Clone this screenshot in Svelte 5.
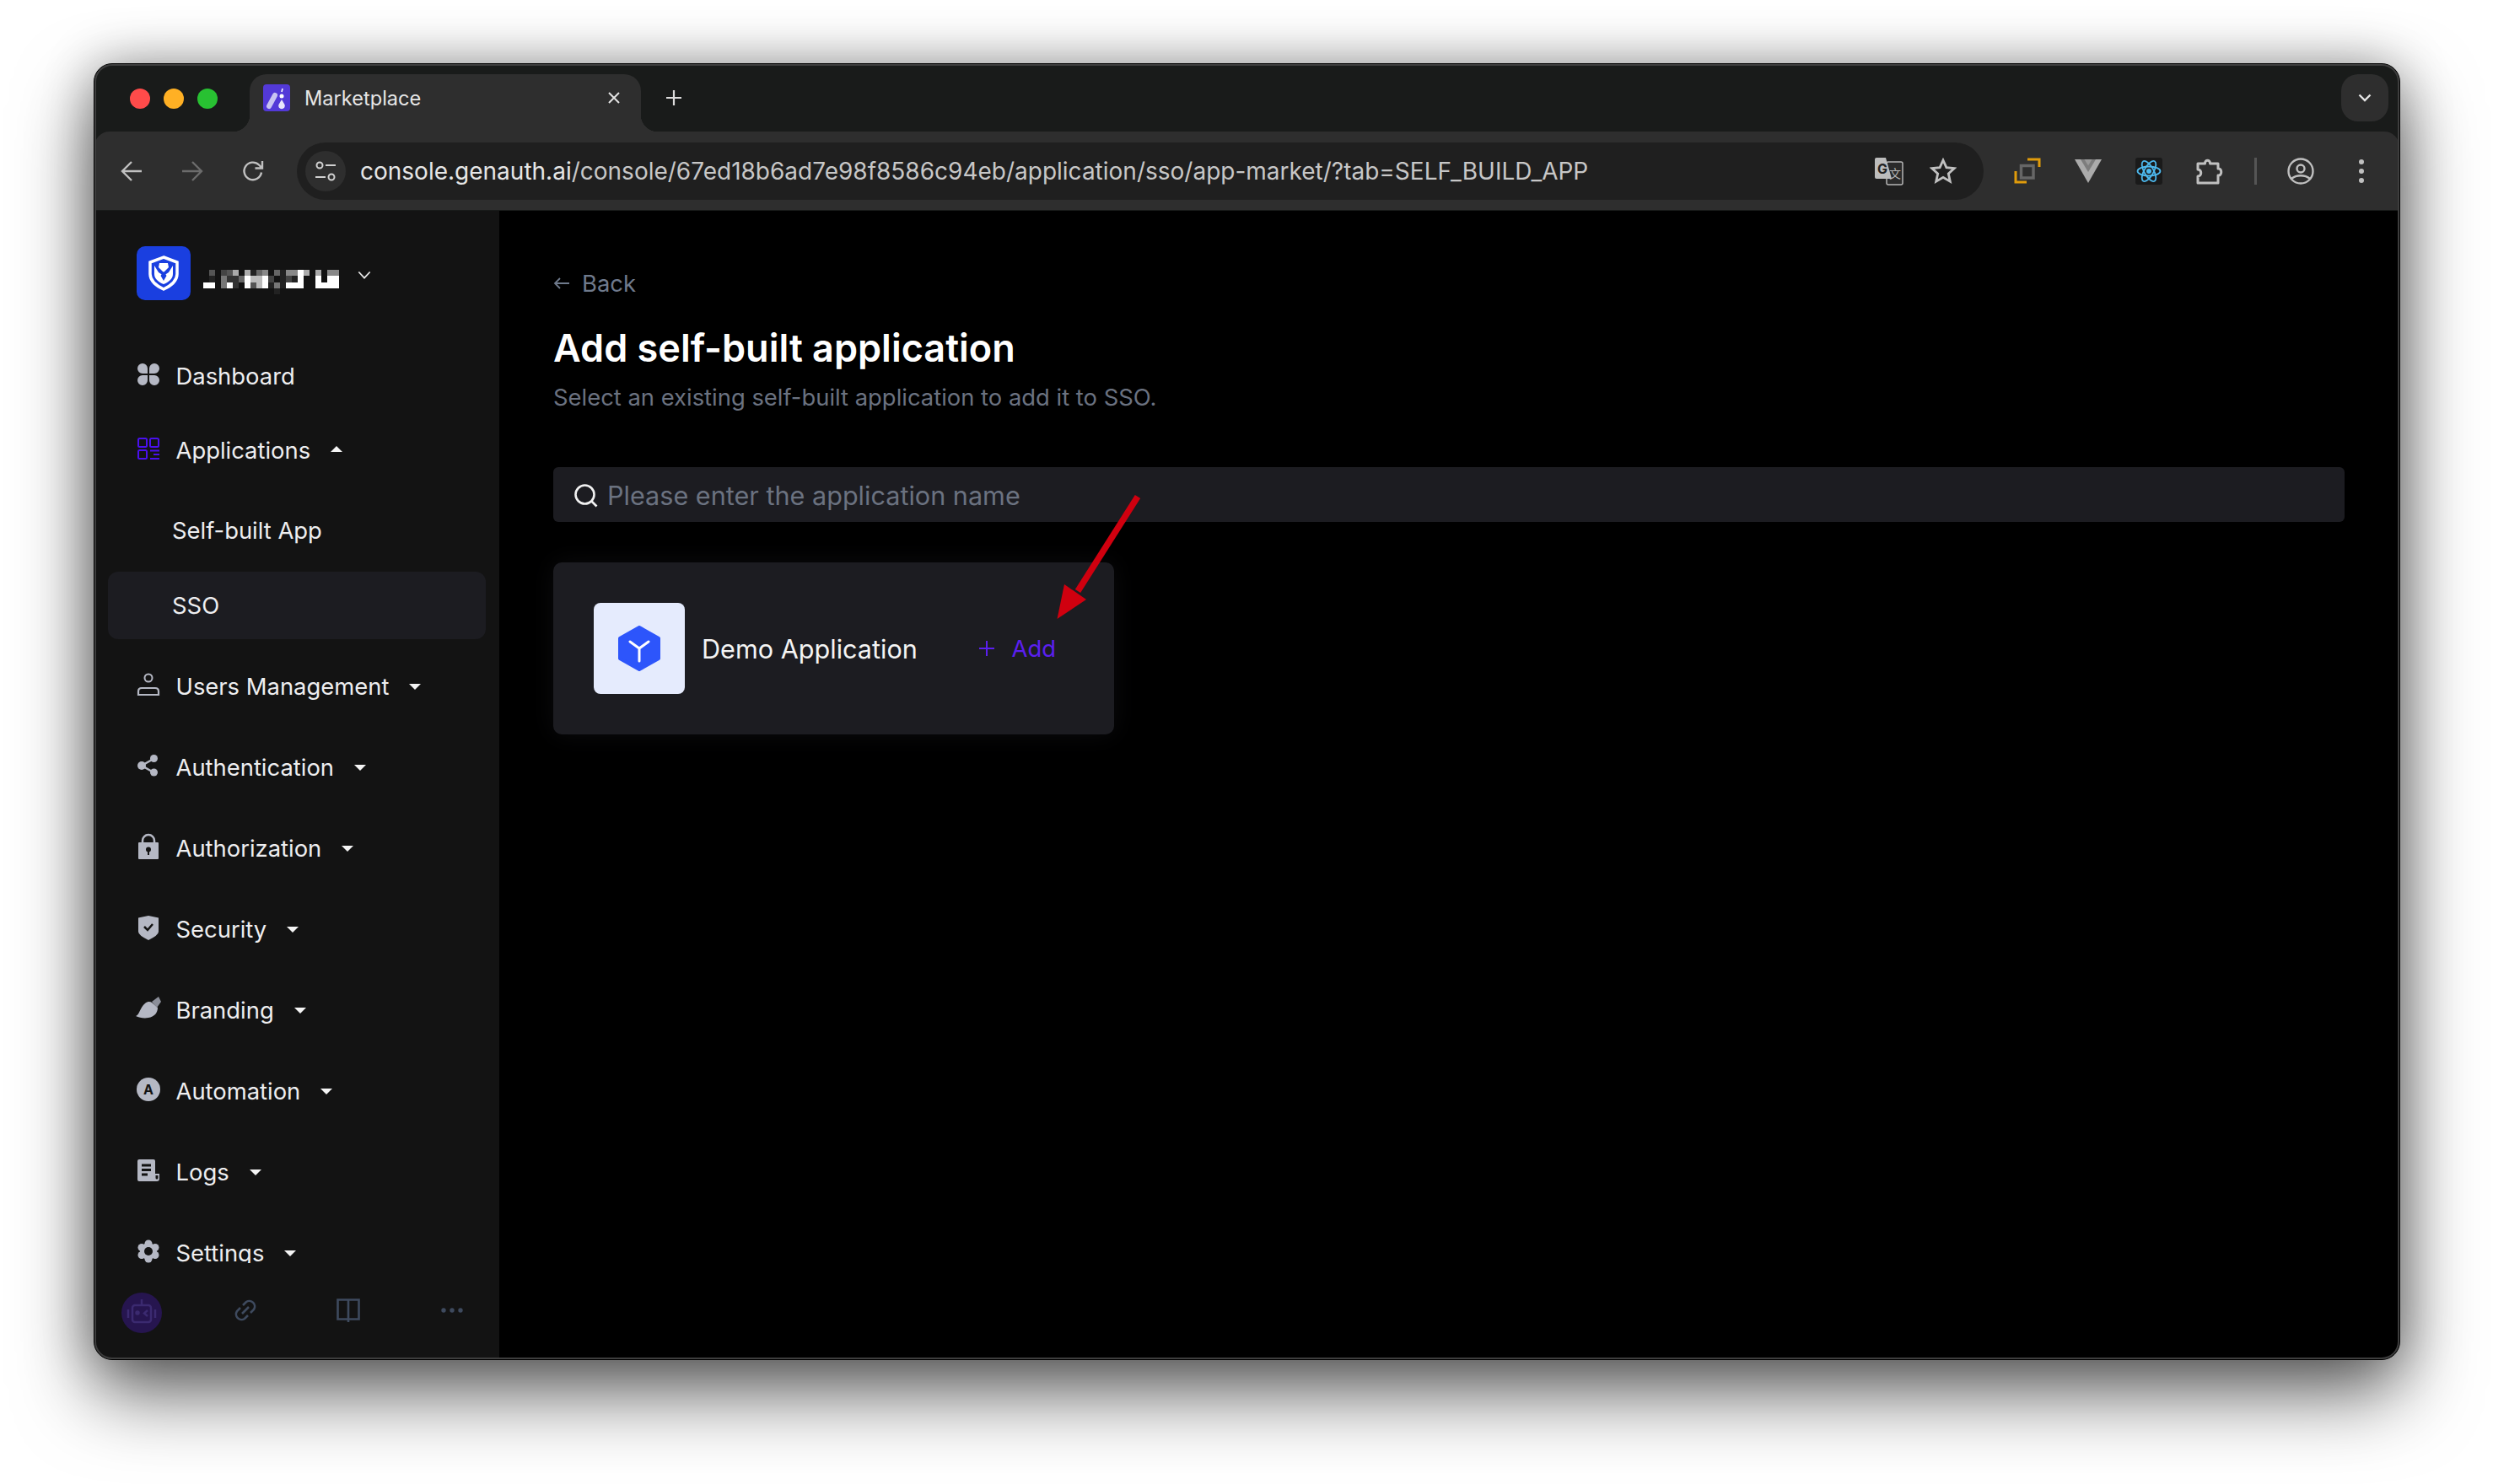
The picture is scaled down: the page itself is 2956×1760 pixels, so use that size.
<script>
	const G = '#b5b8c4';
	const BG = '#131313';

	const menu = [
		{ label: 'Users Management', icon: `<circle cx="13" cy="5" r="4.5" fill="none" stroke="${G}" stroke-width="2"/><path d="M1 25v-4q0-4 4-4h16q4 0 4 4v4z" fill="none" stroke="${G}" stroke-width="2.2"/>` },
		{ label: 'Authentication', icon: `<path d="M19 5 5 13l14 8" fill="none" stroke="${G}" stroke-width="2.5"/><circle cx="19.5" cy="4.5" r="4.5" fill="${G}"/><circle cx="5" cy="13" r="5" fill="${G}"/><circle cx="19.5" cy="21" r="4.5" fill="${G}"/>` },
		{ label: 'Authorization', icon: `<path d="M6 11V6a7 7 0 0 1 14 0v5" fill="none" stroke="${G}" stroke-width="2.5"/><rect x="1" y="8" width="24" height="20" rx="1" fill="${G}"/><circle cx="13" cy="16.5" r="3" fill="${BG}"/><rect x="12" y="17" width="2" height="6" fill="${BG}"/>` },
		{ label: 'Security', icon: `<path d="M1 1.500 13-1l12 2.500V18q0 4-12 10Q1 22 1 18z" fill="${G}"/><path d="m8 12 4 4 6-7" fill="none" stroke="${BG}" stroke-width="2.5"/>` },
		{ label: 'Branding', icon: `<path d="M-2 22C2 21 3 12 9 7c3-2.500 6-2.500 8-1l7 6c0 6-4 11-11 12-5 1-11 0-15-2z" fill="${G}"/><path d="M17 5l8-6 3 6-5 7z" fill="#8b8e99"/>` },
		{ label: 'Automation', icon: `<circle cx="13" cy="13" r="14" fill="${G}"/><text x="13" y="19" text-anchor="middle" font-family="Inter, sans-serif" font-weight="700" font-size="16" fill="${BG}">A</text>` },
		{ label: 'Logs', icon: `<path d="M2 0h17q2 0 2 2v15h5v6q0 3-3 3H2q-2 0-2-2V2q0-2 2-2z" fill="${G}"/><path d="M5 7h11M5 12.500h11M5 18h7" stroke="${BG}" stroke-width="3"/><path d="M21.500 19v3q0 1.500 1.500 1.500t1.500-1.500v-3z" fill="${BG}"/>` },
		{ label: 'Settings', icon: `<circle cx="13" cy="13" r="10" fill="${G}"/><circle cx="13" cy="4" r="4.500" fill="${G}"/><circle cx="13" cy="22" r="4.500" fill="${G}"/><circle cx="5" cy="8.500" r="4.500" fill="${G}"/><circle cx="21" cy="8.500" r="4.500" fill="${G}"/><circle cx="5" cy="17.500" r="4.500" fill="${G}"/><circle cx="21" cy="17.500" r="4.500" fill="${G}"/><circle cx="13" cy="13" r="5" fill="${BG}"/>` }
	];

	// blurred workspace name, one hex digit of grey per 7px cell
	const mosaic = [
		'05045a1a26806288fa0a088',
		'0207336fbbf40242f00f1ff',
		'ff07f30f5bf272fff00ffff',
		'00000000000020000000000'
	];
	const cells = mosaic.flatMap((row, y) =>
		[...row].flatMap((c, x) => {
			if (c === '0') return [];
			const v = parseInt(c, 16) * 17;
			return [{ x: x * 7, y: y * 7.3, fill: `rgb(${v},${v},${v})` }];
		})
	);
</script>

<div class="page">
	<div class="window">
		<div class="strip">
			<div class="lights">
				<i class="red"></i><i class="yellow"></i><i class="green"></i>
			</div>
			<div class="tab">
				<svg class="favicon" viewBox="0 0 32 32" width="32" height="32">
					<rect width="32" height="32" rx="4" fill="#5339d8" />
					<path d="M7 26 14 13" stroke="#c9c4f2" stroke-width="6" stroke-linecap="round" />
					<circle cx="22" cy="14" r="2.500" fill="#fff" />
					<path d="M22 18l3.500 6a3.800 3.800 0 1 1-7 0z" fill="#e9e6fb" />
					<path d="M23 5l-1 4" stroke="#fff" stroke-width="1.500" />
				</svg>
				<span class="tab-title">Marketplace</span>
				<svg class="tab-x" viewBox="0 0 16 16" width="16" height="16">
					<path d="M2 2l12 12M14 2 2 14" stroke="#e3e3e3" stroke-width="2" />
				</svg>
			</div>
			<svg class="plus" viewBox="0 0 20 20" width="20" height="20">
				<path d="M10 1v18M1 10h18" stroke="#dcdcdc" stroke-width="2.200" />
			</svg>
			<div class="tab-list">
				<svg viewBox="0 0 16 10" width="16" height="10">
					<path d="M1.500 1.500 8 8l6.500-6.500" fill="none" stroke="#e6e6e6" stroke-width="2.400" />
				</svg>
			</div>
		</div>

		<div class="toolbar">
			<button class="tool" aria-label="Back">
				<svg viewBox="0 0 26 26" width="26" height="26"><path d="M25 13H3M13 2 2 13l11 11" fill="none" stroke="#c0c0c0" stroke-width="2.400" /></svg>
			</button>
			<button class="tool" aria-label="Forward">
				<svg viewBox="0 0 26 26" width="26" height="26"><path d="M1 13h22M13 2l11 11-11 11" fill="none" stroke="#6c6c6c" stroke-width="2.400" /></svg>
			</button>
			<button class="tool" aria-label="Reload">
				<svg viewBox="0 0 26 26" width="26" height="26"><path d="M23 14.500A10.300 10.300 0 1 1 20 5.500L23.500 9M24 1v8.500h-8.500" fill="none" stroke="#c0c0c0" stroke-width="2.400" /></svg>
			</button>

			<div class="omnibox">
				<div class="site-info">
					<svg viewBox="0 0 26 26" width="26" height="26">
						<circle cx="6" cy="6" r="3.500" fill="none" stroke="#d0d0d0" stroke-width="2" />
						<circle cx="20" cy="20" r="3.500" fill="none" stroke="#d0d0d0" stroke-width="2" />
						<path d="M13 6h12M1 20h12" stroke="#d0d0d0" stroke-width="2" />
					</svg>
				</div>
				<span class="url">console.genauth.ai<span class="url-path">/console/67ed18b6ad7e98f8586c94eb/application/sso/app-market/?tab=SELF_BUILD_APP</span></span>
				<div class="omni-icon">
					<svg viewBox="0 0 34 34" width="34" height="34">
						<rect x="14" y="6" width="19" height="27" rx="2" fill="#2a2a2a" stroke="#b5b5b5" stroke-width="1.500" />
						<text x="24" y="25" text-anchor="middle" font-family="'Noto Sans CJK SC', sans-serif" font-size="14" fill="#b5b5b5">文</text>
						<path d="M2 1h11l7 25H2q-2 0-2-2V3q0-2 2-2z" fill="#bdbdbd" />
						<text x="9" y="20" text-anchor="middle" font-family="Inter, sans-serif" font-weight="700" font-size="16" fill="#222">G</text>
					</svg>
				</div>
				<div class="omni-icon">
					<svg viewBox="0 0 32 32" width="32" height="32">
						<path d="m16 3 3.900 8.600 9.400 1-7 6.300 2 9.300L16 23.400l-8.300 4.800 2-9.300-7-6.300 9.400-1z" fill="none" stroke="#c0c0c0" stroke-width="2.800" />
					</svg>
				</div>
			</div>

			<div class="extensions">
				<button class="tool" aria-label="Extension">
					<svg viewBox="0 0 32 32" width="32" height="32">
						<rect x="8.500" y="9.500" width="14.500" height="14.500" fill="none" stroke="#666" stroke-width="3.500" />
						<path d="M16 2h14v9M2 16v13h13" fill="none" stroke="#e09b0b" stroke-width="3" />
					</svg>
				</button>
				<button class="tool" aria-label="Vue devtools">
					<svg viewBox="0 0 32 28" width="32" height="28">
						<path d="M0 0h32L16 28z" fill="#ababab" />
						<path d="M7 0h18l-9 15z" fill="#7d7d7d" />
						<path d="M11.500 0h9L16 7.500z" fill="#999" />
					</svg>
				</button>
				<button class="tool" aria-label="React devtools">
					<svg viewBox="0 0 32 32" width="32" height="32">
						<rect width="32" height="32" rx="3" fill="#1a1a1a" />
						<g fill="none" stroke="#4db9ee" stroke-width="1.800">
							<ellipse cx="16" cy="16" rx="13.500" ry="5.500" />
							<ellipse cx="16" cy="16" rx="13.500" ry="5.500" transform="rotate(60 16 16)" />
							<ellipse cx="16" cy="16" rx="13.500" ry="5.500" transform="rotate(120 16 16)" />
						</g>
						<circle cx="16" cy="16" r="3" fill="#4db9ee" />
					</svg>
				</button>
				<button class="tool" aria-label="Extensions">
					<svg viewBox="0 0 32 32" width="32" height="32">
						<path d="M2 7h8.500C10 2 17 2 16.500 7H26v6c5-1 5 9 0 8v9H2v-8c5 0 5-8 0-8z" fill="none" stroke="#c0c0c0" stroke-width="3" stroke-linejoin="round" />
					</svg>
				</button>
				<div class="tool-sep"></div>
				<button class="tool" aria-label="Profile">
					<svg viewBox="0 0 32 32" width="32" height="32">
						<circle cx="16" cy="16" r="14.500" fill="none" stroke="#c0c0c0" stroke-width="2.400" />
						<circle cx="16" cy="13" r="4.500" fill="none" stroke="#c0c0c0" stroke-width="2.400" />
						<path d="M5 25c6-5 16-5 22 0" fill="none" stroke="#c0c0c0" stroke-width="2.400" />
					</svg>
				</button>
				<button class="tool" aria-label="Menu">
					<svg viewBox="0 0 6 28" width="6" height="28">
						<circle cx="3" cy="3" r="3" fill="#c0c0c0" />
						<circle cx="3" cy="14" r="3" fill="#c0c0c0" />
						<circle cx="3" cy="25" r="3" fill="#c0c0c0" />
					</svg>
				</button>
			</div>
		</div>

		<div class="body">
			<aside class="sidebar">
				<div class="brand">
					<svg class="logo" viewBox="0 0 64 64" width="64" height="64">
						<rect width="64" height="64" rx="10" fill="#1a3fe0" />
						<path d="M32 13 48 19v14c0 9-8 14-16 18-8-4-16-9-16-18V19z" fill="none" stroke="#fff" stroke-width="3.500" />
						<path d="M27 20h10l1 5-6 6-6-6zM21 23l5 8 6 4 6-4 5-8v10c0 6-6 10-11 12-5-2-11-6-11-12z" fill="#fff" />
						<path d="m32 30 3.500 5-3.500 6-3.500-6z" fill="#1a3fe0" />
					</svg>
					<svg class="mosaic" viewBox="0 0 161 30" width="161" height="30" shape-rendering="crispEdges">
						{#each cells as c}
							<rect x={c.x} y={c.y} width="7" height="7.300" fill={c.fill} />
						{/each}
					</svg>
					<svg class="brand-chevron" viewBox="0 0 18 12" width="16" height="11">
						<path d="M1.500 1.500 9 9.500l7.500-8" fill="none" stroke="#e8e8e8" stroke-width="2" />
					</svg>
				</div>

				<nav class="menu">
					<div class="row">
						<svg class="icon" viewBox="0 0 26 26">
							<path d="M6 0a6 6 0 0 1 6 6v6H6A6 6 0 0 1 6 0zM20 0a6 6 0 0 1 0 12h-6V6a6 6 0 0 1 6-6zM6 14h6v6a6 6 0 1 1-6-6zM14 14h6a6 6 0 1 1-6 6z" fill={G} />
						</svg>
						<span>Dashboard</span>
					</div>
					<div class="row">
						<svg class="icon" viewBox="0 0 26 26" fill="none" stroke="#4a10ee" stroke-width="2">
							<rect x="1" y="1" width="10" height="10" rx="1.500" />
							<rect x="15" y="1" width="10" height="10" rx="1.500" />
							<rect x="1" y="15" width="10" height="10" rx="1.500" />
							<path d="M15 15.500h11M19 20h7M15 25h11" />
						</svg>
						<span>Applications</span>
						<i class="caret up"></i>
					</div>
					<div class="row sub first">Self-built App</div>
					<div class="row sub active">SSO</div>
					{#each menu as item (item.label)}
						<div class="row group">
							<svg class="icon" viewBox="0 0 26 26">{@html item.icon}</svg>
							<span>{item.label}</span>
							<i class="caret"></i>
						</div>
					{/each}
				</nav>

				<div class="sidebar-foot">
					<div class="robot">
						<svg viewBox="0 0 36 36" width="36" height="36" fill="none" stroke="#3b2a70" stroke-width="2.500">
							<rect x="7" y="9" width="22" height="20" rx="3" />
							<path d="M18 2v6M2 14v10M34 14v10" />
							<circle cx="13" cy="18" r="1.500" fill="#3b2a70" />
							<path d="m25 15-4 3.500 4 3.500" />
						</svg>
					</div>
					<button class="foot-btn" aria-label="Link">
						<svg viewBox="0 0 28 28" width="28" height="28" fill="none" stroke="#3e4a5e" stroke-width="2.600">
							<path d="M11 8l4-4a6.500 6.500 0 0 1 9 9l-4 4M17 20l-4 4a6.500 6.500 0 0 1-9-9l4-4M10 18l8-8" />
						</svg>
					</button>
					<button class="foot-btn" aria-label="Docs">
						<svg viewBox="0 0 28 28" width="28" height="28" fill="none" stroke="#3e4a5e" stroke-width="2.600">
							<path d="M1.500 1.500h25v23h-25zM14 1.500V28" />
						</svg>
					</button>
					<button class="foot-btn" aria-label="More">
						<svg viewBox="0 0 26 6" width="26" height="6" fill="#3e4a5e">
							<circle cx="3" cy="3" r="2.700" />
							<circle cx="13" cy="3" r="2.700" />
							<circle cx="23" cy="3" r="2.700" />
						</svg>
					</button>
				</div>
			</aside>

			<main class="main">
				<div class="back">
					<svg viewBox="0 0 20 18" width="20" height="18">
						<path d="M19 9H2M8 3 2 9l6 6" fill="none" stroke="#6f7a8c" stroke-width="1.800" />
					</svg>
					<span>Back</span>
				</div>
				<h1>Add self-built application</h1>
				<p class="sub-title">Select an existing self-built application to add it to SSO.</p>

				<div class="search">
					<svg viewBox="0 0 28 28" width="28" height="28">
						<circle cx="12.500" cy="12.500" r="11" fill="none" stroke="#f2f2f2" stroke-width="2.600" />
						<path d="m20.500 20.500 6 6" stroke="#f2f2f2" stroke-width="2.600" />
					</svg>
					<span>Please enter the application name</span>
				</div>

				<div class="card">
					<div class="app-icon">
						<svg viewBox="0 0 50 54" width="50" height="54">
							<path d="M25 2 48 15v24L25 52 2 39V15z" fill="#2d55fb" stroke="#2d55fb" stroke-width="4" stroke-linejoin="round" />
							<path d="M25 27v15M25 27 14 19M25 27l11-8" fill="none" stroke="#fff" stroke-width="3" stroke-linecap="round" />
						</svg>
					</div>
					<span class="app-name">Demo Application</span>
					<span class="add">
						<svg viewBox="0 0 18 18" width="18" height="18">
							<path d="M9 0v18M0 9h18" stroke="#5b1ff0" stroke-width="2" />
						</svg>
						<span>Add</span>
					</span>
				</div>

				<svg class="pointer" viewBox="0 0 110 160" width="110" height="160">
					<path d="M97 5 26 117" stroke="#d0000f" stroke-width="7.500" fill="none" />
					<path d="M1.500 150 10 109 36 127z" fill="#d0000f" />
				</svg>
			</main>
		</div>
	</div>
</div>

<style>
	:global(html),
	:global(body) {
		margin: 0;
		background: #fff;
		overflow: hidden;
	}

	.page {
		position: relative;
		width: 2956px;
		height: 1760px;
		box-sizing: border-box;
		padding: 75px 0 0 111px;
		font-family: Inter, 'Liberation Sans', sans-serif;
		color: #e8e8ea;
	}

	button {
		padding: 0;
		border: 0;
		background: none;
		display: flex;
		align-items: center;
		justify-content: center;
	}

	.window {
		position: relative;
		width: 2735px;
		height: 1538px;
		box-sizing: border-box;
		border: 1px solid #000;
		border-radius: 22px;
		background: #191b1a;
		display: flex;
		flex-direction: column;
		box-shadow: 0 40px 90px rgba(0, 0, 0, 0.6), 0 0 60px rgba(0, 0, 0, 0.3);
	}

	.window::after {
		content: '';
		position: absolute;
		inset: 0;
		border-radius: 21px;
		box-shadow: inset 0 0 0 2px #3d3d3d;
		pointer-events: none;
	}

	.strip {
		height: 80px;
		flex: none;
		display: flex;
		align-items: flex-start;
		padding: 12px 13px 0 42px;
		box-sizing: border-box;
		border-radius: 21px 21px 0 0;
		background: #191b1a;
	}

	.lights {
		display: flex;
		gap: 16px;
		margin-top: 17px;
	}

	.lights i {
		width: 24px;
		height: 24px;
		border-radius: 50%;
	}

	.red { background: #ff4b4a; }
	.yellow { background: #ffb024; }
	.green { background: #28c132; }

	.tab {
		position: relative;
		width: 464px;
		height: 68px;
		margin-left: 38px;
		padding: 0 24px 0 16px;
		box-sizing: border-box;
		display: flex;
		align-items: center;
		background: #2e2e2e;
		border-radius: 20px 20px 0 0;
	}

	.tab::before,
	.tab::after {
		content: '';
		position: absolute;
		bottom: 0;
		width: 20px;
		height: 20px;
	}

	.tab::before {
		left: -20px;
		background: radial-gradient(circle at 0 0, #191b1a 20px, #2e2e2e 20.5px);
	}

	.tab::after {
		right: -20px;
		background: radial-gradient(circle at 100% 0, #191b1a 20px, #2e2e2e 20.5px);
	}

	.favicon {
		flex: none;
		margin-bottom: 12px;
	}

	.tab-title {
		margin-left: 17px;
		margin-bottom: 12px;
		font-size: 23.600px;
		color: #e6e6e6;
	}

	.tab-x {
		margin-left: auto;
		margin-bottom: 12px;
	}

	.plus {
		margin: 18px 0 0 29px;
	}

	.tab-list {
		width: 56px;
		height: 56px;
		margin-left: auto;
		border-radius: 20px;
		background: #2e2e2e;
		display: flex;
		align-items: center;
		justify-content: center;
	}

	.toolbar {
		height: 93px;
		flex: none;
		display: flex;
		align-items: center;
		padding-left: 8px;
		box-sizing: border-box;
		background: #2e2e2e;
		border-radius: 18px 18px 0 0;
	}

	.tool {
		width: 72px;
		height: 48px;
		flex: none;
	}

	.omnibox {
		width: 2000px;
		height: 68px;
		margin-left: 16px;
		flex: none;
		display: flex;
		align-items: center;
		padding: 0 16px 0 10px;
		box-sizing: border-box;
		border-radius: 34px;
		background: #1f1f1f;
	}

	.site-info {
		width: 48px;
		height: 48px;
		flex: none;
		border-radius: 50%;
		background: #2e2e2e;
		display: flex;
		align-items: center;
		justify-content: center;
	}

	.url {
		margin-left: 17px;
		flex: 1;
		font-size: 28px;
		color: #e6e6e6;
		white-space: nowrap;
	}

	.url-path {
		color: #c7c7c7;
	}

	.omni-icon {
		width: 64px;
		flex: none;
		display: flex;
		justify-content: center;
	}

	.extensions {
		margin-left: 16px;
		display: flex;
		align-items: center;
	}

	.tool-sep {
		width: 36px;
		height: 32px;
		flex: none;
		background: linear-gradient(#555, #555) center / 3px 100% no-repeat;
	}

	.body {
		flex: 1;
		min-height: 0;
		margin-top: 1px;
		display: flex;
		border-radius: 0 0 21px 21px;
		overflow: hidden;
	}

	.sidebar {
		width: 480px;
		flex: none;
		display: flex;
		flex-direction: column;
		background: #131313;
	}

	.brand {
		height: 114px;
		flex: none;
		padding: 42px 0 0 50px;
		box-sizing: border-box;
		display: flex;
		align-items: flex-start;
	}

	.logo {
		flex: none;
	}

	.mosaic {
		margin: 28px 0 0 15px;
	}

	.brand-chevron {
		margin: 29px 0 0 22px;
	}

	.menu {
		flex: 1;
		min-height: 0;
		margin-top: 43px;
		padding: 0 16px;
		overflow: hidden;
		display: flex;
		flex-direction: column;
		gap: 8px;
	}

	.row {
		height: 80px;
		flex: none;
		padding-left: 35px;
		display: flex;
		align-items: center;
		font-size: 27.400px;
		color: #eeeef0;
		white-space: nowrap;
		position: relative;
		top: -1px;
	}

	.row .icon {
		width: 26px;
		height: 26px;
		flex: none;
		margin-right: 19.500px;
		margin-top: -5px;
		overflow: visible;
	}

	.row.sub {
		padding-left: 76px;
		border-radius: 12px;
	}

	.row.first {
		margin-top: 7px;
	}

	.row.active {
		background: #1c1c21;
		top: 0;
	}

	.row.group {
		margin-top: 8px;
		top: 0;
	}

	.caret {
		width: 0;
		height: 0;
		margin-left: 24px;
		border-left: 7px solid transparent;
		border-right: 7px solid transparent;
		border-top: 7px solid #f4f4f4;
	}

	.caret.up {
		border-top: 0;
		border-bottom: 7px solid #f4f4f4;
		margin-top: -3px;
	}

	.sidebar-foot {
		height: 114px;
		flex: none;
		padding: 35px 0 0 32px;
		box-sizing: border-box;
		display: flex;
		align-items: flex-start;
		gap: 74.500px;
	}

	.robot,
	.foot-btn {
		width: 48px;
		height: 48px;
		flex: none;
	}

	.robot {
		border-radius: 50%;
		background: #26154f;
		display: flex;
		align-items: center;
		justify-content: center;
	}

	.foot-btn {
		margin-top: -3px;
	}

	.main {
		position: relative;
		flex: 1;
		min-width: 0;
		padding: 66px 65px 0 64px;
		background: #000;
	}

	.back {
		height: 40px;
		display: flex;
		align-items: center;
		gap: 14px;
		font-size: 27.400px;
		color: #6f7a8c;
	}

	h1 {
		margin: 27px 0 0;
		font-size: 45px;
		line-height: 60px;
		font-weight: 600;
		color: #fff;
	}

	.sub-title {
		margin: 8px 0 0;
		font-size: 27.400px;
		line-height: 40px;
		color: #6b7280;
	}

	.search {
		height: 65px;
		margin-top: 63px;
		padding: 2px 0 0 25px;
		box-sizing: border-box;
		display: flex;
		align-items: center;
		gap: 11px;
		border-radius: 6px;
		background: #1c1c21;
		font-size: 30.600px;
		color: #6b7280;
	}

	.card {
		width: 665px;
		height: 204px;
		margin-top: 48px;
		padding-left: 48px;
		box-sizing: border-box;
		display: flex;
		align-items: center;
		border-radius: 10px;
		background: #1c1c21;
		box-shadow: 0 0 30px rgba(40, 40, 48, 0.3);
	}

	.app-icon {
		width: 108px;
		height: 108px;
		flex: none;
		display: flex;
		align-items: center;
		justify-content: center;
		border-radius: 8px;
		background: #e5ebfd;
	}

	.app-name {
		margin-left: 20px;
		font-size: 30.600px;
		color: #f4f4f4;
		white-space: nowrap;
	}

	.add {
		margin-left: auto;
		margin-right: 69px;
		display: flex;
		align-items: center;
		gap: 21px;
		font-size: 27.400px;
		color: #5b1ff0;
	}

	.pointer {
		position: absolute;
		left: 660px;
		top: 334px;
		overflow: visible;
	}
</style>
